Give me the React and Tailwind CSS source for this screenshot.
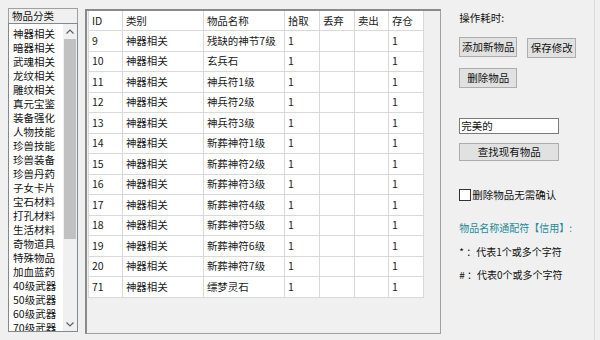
import React from "react";

const cats = ["神器相关","暗器相关","武魂相关","龙纹相关","雕纹相关","真元宝鉴","装备强化","人物技能","珍兽技能","珍兽装备","珍兽丹药","子女卡片","宝石材料","打孔材料","生活材料","奇物道具","特殊物品","加血蓝药","40级武器","50级武器","60级武器","70级武器"];

const rows = [
  ["9","神器相关","残缺的神节7级"],
  ["10","神器相关","玄兵石"],
  ["11","神器相关","神兵符1级"],
  ["12","神器相关","神兵符2级"],
  ["13","神器相关","神兵符3级"],
  ["14","神器相关","新葬神符1级"],
  ["15","神器相关","新葬神符2级"],
  ["16","神器相关","新葬神符3级"],
  ["17","神器相关","新葬神符4级"],
  ["18","神器相关","新葬神符5级"],
  ["19","神器相关","新葬神符6级"],
  ["20","神器相关","新葬神符7级"],
  ["71","神器相关","缥梦灵石"],
];

const widths = ["w-[34px]","w-[81px]","w-[81px]","w-[35px]","w-[35px]","w-[34px]","w-[35px]"];
const heads = ["ID","类别","物品名称","拾取","丢弃","卖出","存仓"];

function Row({ cells, h }) {
  return (
    <div className={`flex ${h} border-b border-[#d9d9d9]`}>
      {cells.map((c, i) => (
        <div key={i} className={`${widths[i]} shrink-0 border-r border-[#d9d9d9] pl-[3px] flex items-center text-[10.5px] leading-[14px] text-[#1a1a1a] overflow-hidden whitespace-nowrap`}>
          {c}
        </div>
      ))}
    </div>
  );
}

export default function App() {
  return (
    <div className="w-[600px] h-[340px] bg-[#f0f0f0] flex items-start overflow-hidden" style={{ fontFamily: '"Noto Sans CJK SC", "Microsoft YaHei", sans-serif' }}>
      {/* left category list */}
      <div className="ml-[8px] mt-[8px] w-[70px] flex flex-col">
        <div className="h-[15px] border border-b-0 border-[#a0a0a0] bg-[#f0f0f0] pl-[3px] text-[10.5px] leading-[14px] text-[#111]">物品分类</div>
        <div className="h-[309px] border border-[#828790] bg-white flex">
          <div className="flex-1 flex flex-col pt-[3px] pl-[4px] overflow-hidden">
            {cats.map((c) => (
              <div key={c} className="h-[14px] shrink-0 leading-[14px] text-[10.5px] text-[#111] whitespace-nowrap">{c}</div>
            ))}
          </div>
          <div className="w-[14px] bg-[#f0f0f0] flex flex-col items-center">
            <div className="h-[14px] flex items-center justify-center">
              <svg width="8" height="5" viewBox="0 0 8 5"><path d="M0.5 4.5 L4 1 L7.5 4.5" fill="none" stroke="#606060" strokeWidth="1.2" /></svg>
            </div>
            <div className="w-[12px] h-[200px] mt-[1px] bg-[#c1c1c1]" />
            <div className="flex-1" />
            <div className="h-[14px] flex items-center justify-center">
              <svg width="8" height="5" viewBox="0 0 8 5"><path d="M0.5 0.5 L4 4 L7.5 0.5" fill="none" stroke="#606060" strokeWidth="1.2" /></svg>
            </div>
          </div>
        </div>
      </div>

      {/* table frame */}
      <div className="ml-[7px] mt-[9px] w-[357px] h-[325px] border-t-2 border-l-2 border-[#8a8a8a] border-r border-b border-r-[#a0a0a0] border-b-[#a0a0a0] pl-[1px] bg-[#f0f0f0]">
        <div className="w-[336px] bg-white border-l border-[#d9d9d9]">
          <Row cells={heads} h="h-[20px]" />
          {rows.map((r) => (
            <Row key={r[0]} cells={[r[0], r[1], r[2], "1", "", "", "1"]} h="h-[20.5px]" />
          ))}
        </div>
      </div>

      {/* right panel */}
      <div className="ml-[18px] mt-[11px] w-[135px] flex flex-col text-[10.5px] text-[#111]">
        <div className="h-[14px] leading-[14px]">操作耗时:</div>
        <div className="flex gap-[10px] mt-[12px]">
          <div className="w-[58px] h-[20px] bg-[#e1e1e1] border border-[#adadad] flex items-center justify-center leading-[14px]">添加新物品</div>
          <div className="w-[49px] h-[20px] bg-[#e1e1e1] border border-[#adadad] flex items-center justify-center mt-[1px] leading-[14px]">保存修改</div>
        </div>
        <div className="w-[58px] h-[20px] mt-[10px] bg-[#e1e1e1] border border-[#adadad] flex items-center justify-center leading-[14px]">删除物品</div>
        <div className="w-[100px] h-[16px] mt-[30px] bg-white border border-[#7a7a7a] pl-[1px] leading-[14px]">完美的</div>
        <div className="w-[100px] h-[18px] mt-[9px] bg-[#e1e1e1] border border-[#adadad] flex items-center justify-center leading-[14px]">查找现有物品</div>
        <div className="flex items-center mt-[27px] h-[13px]">
          <div className="w-[12px] h-[12px] bg-white border border-[#333]" />
          <span className="ml-[1px] leading-[13px]">删除物品无需确认</span>
        </div>
        <div className="mt-[20px] h-[14px] leading-[14px] text-[10px] text-[#1f8a9a] whitespace-nowrap">物品名称通配符【信用】:</div>
        <div className="mt-[10px] h-[14px] leading-[14px] text-[10px] whitespace-nowrap">*&nbsp;：代表1个或多个字符</div>
        <div className="mt-[9px] h-[14px] leading-[14px] text-[10px] whitespace-nowrap">#&nbsp;：代表0个或多个字符</div>
      </div>
      <div className="ml-auto mr-[5px] w-px h-[340px] bg-[#dcdcdc]" />
    </div>
  );
}
